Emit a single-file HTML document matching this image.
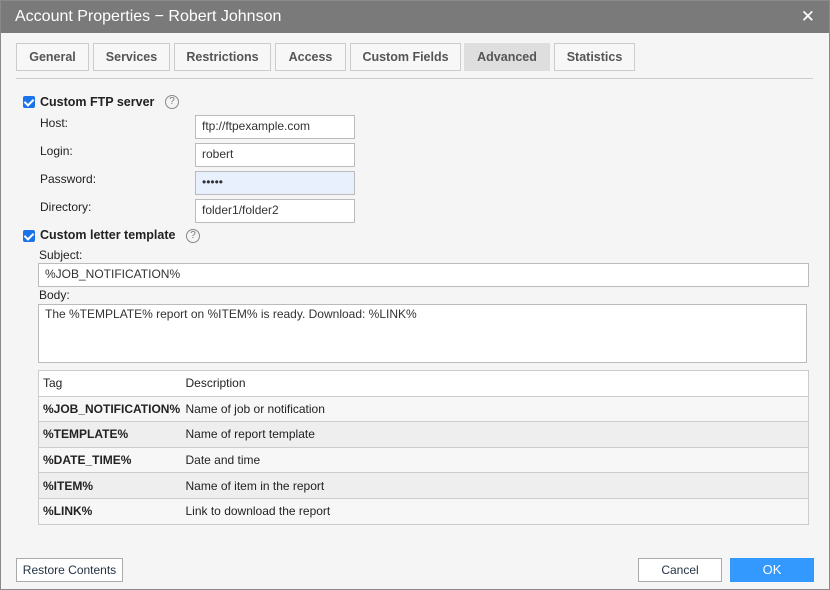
<!DOCTYPE html>
<html><head><style>
*{box-sizing:border-box;margin:0;padding:0}
body{width:830px;height:590px;overflow:hidden;font-family:"Liberation Sans",Arial,sans-serif;font-size:12px;color:#222;background:#f5f5f5}
.win{position:absolute;left:0;top:0;width:830px;height:590px;background:#f5f5f5}
.frame{position:absolute;left:0;top:0;width:830px;height:590px;border:1px solid #8a8a8a;pointer-events:none}
.title{position:absolute;left:0;top:0;width:830px;height:33px;background:#7a7a7a;color:#fff;font-size:16px;line-height:33px;padding-left:15px}
.x{position:absolute;right:15px;top:0;font-size:17px;color:#fff;line-height:33px}
.tab{position:absolute;top:43px;height:28px;border:1px solid #ccc;background:#f7f7f7;font-weight:bold;color:#555;font-size:12.5px;line-height:26px;text-align:center}
.tab.a{background:#dedede;border-color:#dedede}
.hr{position:absolute;left:16px;top:78px;width:797px;height:1px;background:#ccc}
.a0{position:absolute}
.cb{position:absolute;width:12px;height:12px;background:#1a73e8;border-radius:2px}
.cb:after{content:"";position:absolute;left:3px;top:1px;width:4px;height:7px;border:solid #fff;border-width:0 2px 2px 0;transform:rotate(45deg)}
.q{position:absolute;width:14px;height:14px;border:1px solid #888;border-radius:50%;color:#777;font-size:10px;text-align:center;line-height:12px}
.inp{position:absolute;background:#fff;border:1px solid #bbb;padding-left:6px;line-height:21px;color:#333}
.b{font-weight:bold;font-size:12.5px}
table{position:absolute;left:38px;top:370px;width:771px;border-collapse:collapse;border:1px solid #ccc}
td{height:25.6px;padding-left:4px;border-top:1px solid #ccc;color:#222}
td.t{font-weight:bold;width:143px}
.btn{position:absolute;top:558px;height:24px;border:1px solid #aaa;background:#fff;text-align:center;line-height:22px;color:#234}
</style></head><body><div class="win">
<div class="title">Account Properties − Robert Johnson</div><div class="x">✕</div>
<div class="tab" style="left:16px;width:73px">General</div>
<div class="tab" style="left:93px;width:77px">Services</div>
<div class="tab" style="left:174px;width:97px">Restrictions</div>
<div class="tab" style="left:275px;width:71px">Access</div>
<div class="tab" style="left:350px;width:111px">Custom Fields</div>
<div class="tab a" style="left:464px;width:86px">Advanced</div>
<div class="tab" style="left:554px;width:81px">Statistics</div>
<div class="hr"></div>
<div class="cb" style="left:23px;top:96px"></div><div class="a0 b" style="left:40px;top:95px">Custom FTP server</div><div class="q" style="left:165px;top:95px">?</div>
<div class="a0" style="left:40px;top:116px">Host:</div><div class="inp" style="left:195px;top:115px;width:160px;height:24px">ftp://ftpexample.com</div>
<div class="a0" style="left:40px;top:144px">Login:</div><div class="inp" style="left:195px;top:143px;width:160px;height:24px">robert</div>
<div class="a0" style="left:40px;top:172px">Password:</div><div class="inp" style="left:195px;top:171px;width:160px;height:24px;background:#e8f0fe">•••••</div>
<div class="a0" style="left:40px;top:200px">Directory:</div><div class="inp" style="left:195px;top:199px;width:160px;height:24px">folder1/folder2</div>
<div class="cb" style="left:23px;top:230px"></div><div class="a0 b" style="left:40px;top:228px">Custom letter template</div><div class="q" style="left:186px;top:229px">?</div>
<div class="a0" style="left:39px;top:248px">Subject:</div><div class="inp" style="left:38px;top:263px;width:771px;height:24px">%JOB_NOTIFICATION%</div>
<div class="a0" style="left:39px;top:288px">Body:</div><div class="inp" style="left:38px;top:304px;width:769px;height:59px;line-height:18px">The %TEMPLATE% report on %ITEM% is ready. Download: %LINK%</div>
<table>
<tr style="background:#fff"><td style="border-top:0">Tag</td><td style="border-top:0">Description</td></tr>
<tr style="background:#f7f7f7"><td class="t">%JOB_NOTIFICATION%</td><td>Name of job or notification</td></tr>
<tr style="background:#eee"><td class="t">%TEMPLATE%</td><td>Name of report template</td></tr>
<tr style="background:#f7f7f7"><td class="t">%DATE_TIME%</td><td>Date and time</td></tr>
<tr style="background:#eee"><td class="t">%ITEM%</td><td>Name of item in the report</td></tr>
<tr style="background:#f7f7f7"><td class="t">%LINK%</td><td>Link to download the report</td></tr>
</table>
<div class="btn" style="left:16px;width:107px">Restore Contents</div>
<div class="btn" style="left:638px;width:84px">Cancel</div>
<div class="btn" style="left:730px;width:84px;background:#3399ff;border-color:#3399ff;color:#fff;font-size:13px">OK</div>
<div class="frame"></div>
</div></body></html>
